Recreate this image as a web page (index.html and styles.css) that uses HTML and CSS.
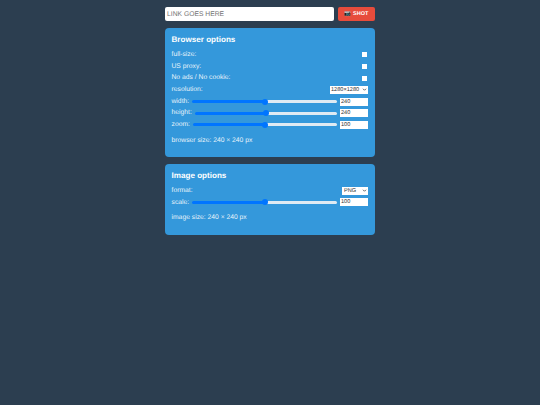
FILE: index.html
```html
<!DOCTYPE html>
<html lang="en">
<head>
<meta charset="utf-8">
<title>Screenshot</title>
<link rel="stylesheet" href="styles.css">
</head>
<body>
<main class="app">
  <form class="top">
    <input class="link" type="text" placeholder="LINK GOES HERE">
    <button class="shot" type="button"><span class="cam">📷</span> SHOT</button>
  </form>
  <section class="panel browser">
    <h2>Browser options</h2>
    <div class="rows">
      <label class="row"><span>full-size:</span><input class="check" type="checkbox"></label>
      <label class="row"><span>US proxy:</span><input class="check" type="checkbox"></label>
      <label class="row"><span>No ads / No cookie:</span><input class="check" type="checkbox"></label>
      <label class="row"><span>resolution:</span><select class="res"><option>1280×1280</option></select></label>
      <label class="row"><span>width:</span><input class="range" type="range" value="50"><input class="num" type="text" value="240"></label>
      <label class="row"><span>height:</span><input class="range" type="range" value="50"><input class="num" type="text" value="240"></label>
      <label class="row"><span>zoom:</span><input class="range" type="range" value="50"><input class="num" type="text" value="100"></label>
    </div>
    <p class="size">browser size: 240 × 240 px</p>
  </section>
  <section class="panel image">
    <h2>Image options</h2>
    <div class="rows">
      <label class="row"><span>format:</span><select class="fmt"><option>PNG</option></select></label>
      <label class="row"><span>scale:</span><input class="range" type="range" value="50"><input class="num" type="text" value="100"></label>
    </div>
    <p class="size">image size: 240 × 240 px</p>
  </section>
</main>
</body>
</html>
```
FILE: styles.css
```css
* { box-sizing: border-box; }
html, body { height: 100%; }
body {
  margin: 0;
  background: #2c3e50;
  font-family: "Liberation Sans", Arial, sans-serif;
  color: #e6f2fa;
  font-size: 6.75px;
  text-rendering: geometricPrecision;
}
.app {
  width: 210px;
  margin: 0 auto;
  padding-top: 7px;
  display: flex;
  flex-direction: column;
  gap: 7px;
}
.top { display: flex; gap: 4px; height: 14px; }
.link {
  flex: 1;
  min-width: 0;
  height: 14px;
  border: 0;
  border-radius: 2px;
  background: #fff;
  padding: 0 2px;
  font: 6.75px "Liberation Sans", Arial, sans-serif;
  text-rendering: geometricPrecision;
}
.link::placeholder { color: #757575; opacity: 1; }
.shot {
  width: 37px;
  height: 14px;
  padding: 0;
  border: 0;
  border-radius: 2px;
  background: #e74c3c;
  color: #fff;
  font: bold 5.5px "Liberation Sans", Arial, sans-serif;
  text-rendering: geometricPrecision;
}
.cam { font-size: 5.5px; }
.panel {
  background: #3498db;
  border-radius: 4px;
  padding: 6.5px;
}
.browser { height: 129px; }
.image { height: 71px; }
h2 {
  margin: 0;
  font-size: 8.1px;
  line-height: 10px;
  font-weight: bold;
  color: #fff;
}
.rows { display: flex; flex-direction: column; gap: 2.2px; margin-top: 5.5px; }
.row {
  display: flex;
  align-items: center;
  height: 9.5px;
  line-height: 9.5px;
  white-space: nowrap;
}
.row span:first-child { margin-right: auto; }
.check {
  appearance: none;
  margin: 0 1.5px 0 0;
  width: 5px;
  height: 5px;
  background: #fff;
}
.res, .fmt {
  appearance: none;
  height: 8px;
  padding: 0 0 0 1px;
  border: 0;
  border-radius: 0;
  color: #333;
  font: 5.6px/8px "Liberation Sans", Arial, sans-serif;
  text-rendering: geometricPrecision;
  background: #fff url("data:image/svg+xml,%3Csvg xmlns='http://www.w3.org/2000/svg' viewBox='0 0 6 4'%3E%3Cpath d='M1 1l2 2 2-2' fill='none' stroke='%23333' stroke-width='1'/%3E%3C/svg%3E") no-repeat right 1px center / 5px 3px;
}
.res { width: 38px; margin-right: 0.5px; }
.fmt { width: 26px; margin-right: 0.5px; padding-left: 2px; }
.range {
  appearance: none;
  flex: 1;
  min-width: 0;
  height: 6px;
  margin: 0 3px 0 3px;
  background: transparent;
}
.range::-webkit-slider-runnable-track {
  height: 3px;
  border-radius: 2px;
  background: linear-gradient(to right, #0075ff 50%, #dfeaf3 50%);
}
.range::-webkit-slider-thumb {
  appearance: none;
  width: 6px;
  height: 6px;
  margin-top: -1.5px;
  border-radius: 50%;
  background: #0075ff;
}
.num {
  width: 28px;
  height: 8px;
  flex: none;
  margin-right: 0.5px;
  border: 0;
  padding: 0 1px;
  background: #fff;
  color: #333;
  font: 5.6px/8px "Liberation Sans", Arial, sans-serif;
  text-rendering: geometricPrecision;
}
.size { margin: 6px 0 0; line-height: 9px; }
```
